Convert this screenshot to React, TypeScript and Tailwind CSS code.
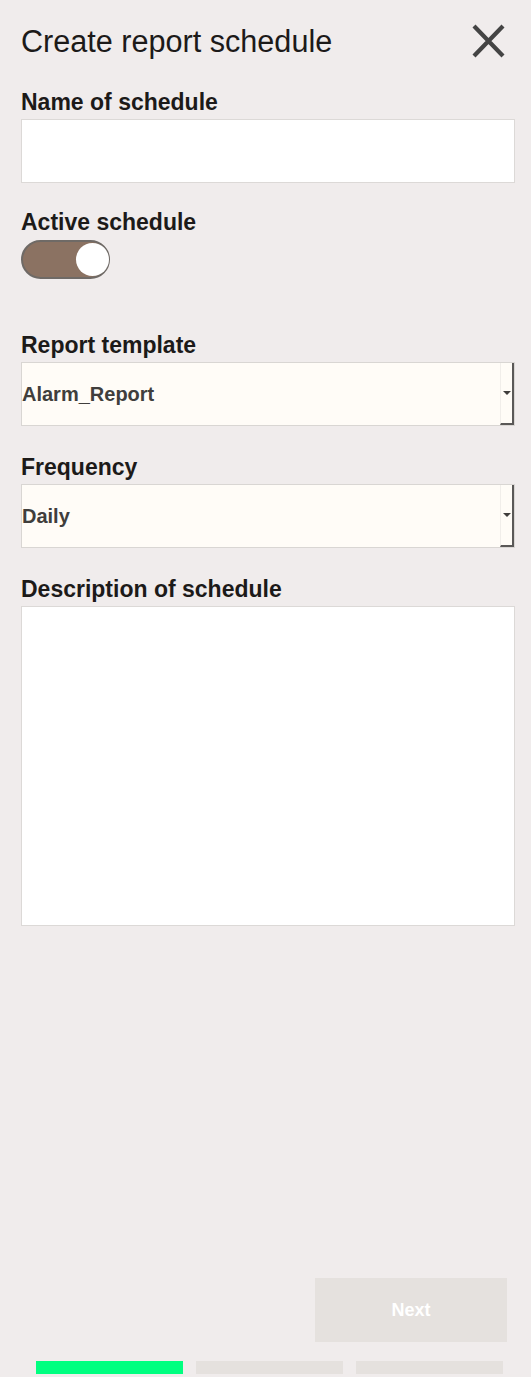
import { useState } from 'react'

function Label({ children }: { children: string }) {
  return <span className="block text-[23px] leading-[26px] font-bold text-[#1c1a19]">{children}</span>
}

function FakeSelect({ value }: { value: string }) {
  return (
    <div className="flex h-[64px] items-stretch border border-[#d9d6d3] bg-[#fffcf7]">
      <span className="flex flex-1 items-center text-[20px] font-bold text-[#403e3c]">{value}</span>
      <span className="flex w-[14px] items-center justify-center border-r-2 border-b-2 border-l border-r-[#5a5857] border-b-[#5a5857] border-l-[#f1eeea]">
        <svg width="8" height="4" viewBox="0 0 8 4">
          <path d="M0 0h8L4 4z" fill="#3f3d3c" />
        </svg>
      </span>
    </div>
  )
}

export default function App() {
  const [active, setActive] = useState(true)

  return (
    <div className="flex h-[1377px] flex-col bg-[#f0ecec] font-['Liberation_Sans',Arial,sans-serif]">
      <div className="pl-[21px] pr-[16px]">
        <div className="mt-[23px] flex items-center justify-between">
          <h1 className="text-[30.6px] leading-[36px] font-normal text-[#1c1a19]">Create report schedule</h1>
          <button type="button" className="mr-[10px] text-[#444]" aria-label="Close">
            <svg width="33" height="34" viewBox="0 0 33 34" fill="none" stroke="currentColor" strokeWidth="4.2">
              <path d="M2 2L31 32M31 2L2 32" />
            </svg>
          </button>
        </div>

        <div className="mt-[30px]">
          <Label>Name of schedule</Label>
          <input type="text" className="mt-[4px] block h-[64px] w-full border border-[#dcd9d7] bg-white outline-none" />
        </div>

        <div className="mt-[26px]">
          <Label>Active schedule</Label>
          <button
            type="button"
            onClick={() => setActive((v) => !v)}
            className={`mt-[5px] flex h-[39px] w-[89px] items-center rounded-full border-2 border-[#6f6a66] ${
              active ? 'justify-end bg-[#8b7262]' : 'justify-start bg-[#d8d3cf]'
            }`}
          >
            <span className="-mr-[1px] block h-[33px] w-[33px] rounded-full bg-white" />
          </button>
        </div>

        <div className="mt-[53px]">
          <Label>Report template</Label>
          <div className="mt-[4px]">
            <FakeSelect value="Alarm_Report" />
          </div>
        </div>

        <div className="mt-[28px]">
          <Label>Frequency</Label>
          <div className="mt-[4px]">
            <FakeSelect value="Daily" />
          </div>
        </div>

        <div className="mt-[28px]">
          <Label>Description of schedule</Label>
          <textarea className="mt-[4px] block h-[320px] w-full resize-none border border-[#dcd9d7] bg-white outline-none" />
        </div>
      </div>

      <div className="flex-1" />

      <div className="flex justify-end pr-[24px]">
        <button type="button" className="h-[64px] w-[192px] bg-[#e5e1de] text-[18px] font-bold text-white">
          Next
        </button>
      </div>

      <div className="mt-[19px] mb-[3px] flex gap-[13px] pl-[36px]">
        <div className="h-[13px] w-[147px] bg-[#00ff80]" />
        <div className="h-[13px] w-[147px] bg-[#e5e1de]" />
        <div className="h-[13px] w-[147px] bg-[#e5e1de]" />
      </div>
    </div>
  )
}
